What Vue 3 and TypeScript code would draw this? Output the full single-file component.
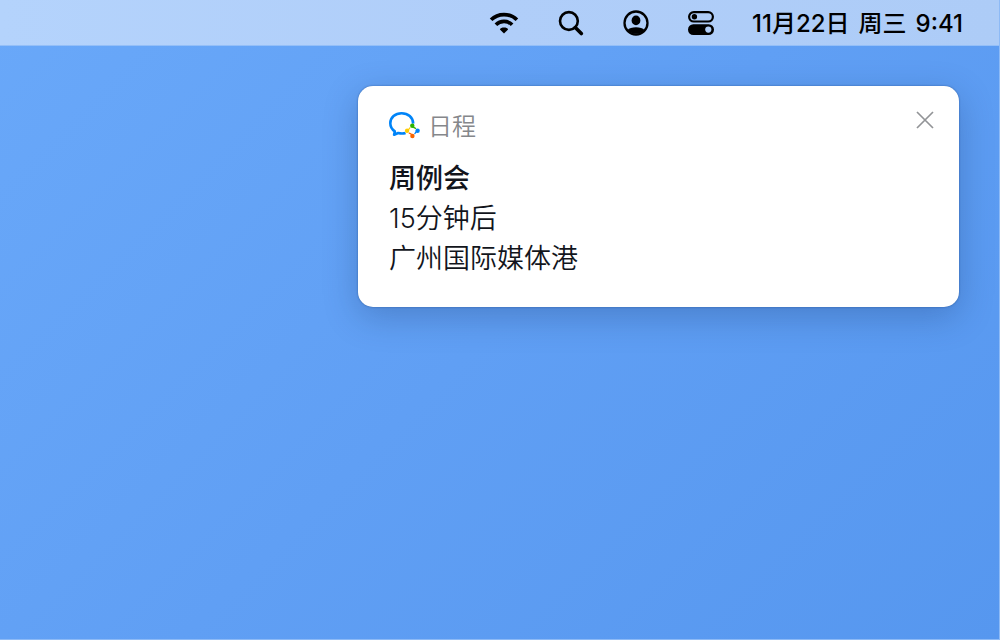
<script setup lang="ts">
import { ref } from 'vue'

interface Reminder {
  app: string
  title: string
  lines: string[]
}

const now: string[] = ['11月22日', '周三', '9:41']
const open = ref(true)
const reminder: Reminder = {
  app: '日程',
  title: '周例会',
  lines: ['15分钟后', '广州国际媒体港'],
}
</script>

<template>
  <div class="desktop">
    <header class="menubar">
      <button class="status" type="button" aria-label="Wi-Fi">
        <svg width="30" height="26" viewBox="0 0 30 26">
          <g fill="none" stroke="#000" stroke-width="3.7">
            <path d="M2.1 9.8C9 2.8 21 2.8 27.9 9.8" />
            <path d="M6.9 14.8C11.3 10.3 18.7 10.3 23.1 14.8" />
          </g>
          <path d="M15 23.6L10.9 19.4C11.6 16.8 18.4 16.8 19.1 19.4Z" />
        </svg>
      </button>
      <button class="status" type="button" aria-label="搜索">
        <svg width="26" height="26" viewBox="0 0 26 26">
          <circle cx="10.9" cy="11" r="8.9" fill="none" stroke="#000" stroke-width="2.6" />
          <path d="M17.3 17.6L23.3 23.6" stroke="#000" stroke-width="3.6" stroke-linecap="round" />
        </svg>
      </button>
      <button class="status" type="button" aria-label="用户">
        <svg width="26" height="26" viewBox="0 0 26 26">
          <circle cx="13" cy="13" r="11.5" fill="none" stroke="#000" stroke-width="2.3" />
          <ellipse cx="13" cy="10.4" rx="4.4" ry="4.9" />
          <path d="M4.6 20C7.2 16.2 18.8 16.2 21.4 20C17.5 25 8.5 25 4.6 20Z" />
        </svg>
      </button>
      <button class="status" type="button" aria-label="控制中心">
        <svg width="26" height="26" viewBox="0 0 26 26">
          <rect x="1.1" y="2.1" width="23.8" height="9.4" rx="4.7" fill="none" stroke="#000" stroke-width="2.2" />
          <circle cx="6.4" cy="6.8" r="2.7" />
          <rect x="0" y="14.3" width="26" height="10.7" rx="5.3" />
          <circle cx="20.3" cy="19.6" r="3.1" fill="#b0cef9" />
        </svg>
      </button>
      <time class="clock">
        <span v-for="part in now" :key="part">{{ part }}</span>
      </time>
    </header>

    <main class="stage">
      <article v-if="open" class="notice">
        <div class="source">
          <svg width="32" height="30" viewBox="0 0 32 30" aria-hidden="true">
            <path
              d="M24.2 12.6C24 6.4 19 2.2 12.6 2.2C6.2 2.2 1.3 6.5 1.3 12.3C1.3 15.8 3.1 18.6 5.8 20.4L5.1 23.8L9.2 22C11.5 22.6 14.3 22.7 16.6 22"
              fill="none"
              stroke="#0084f8"
              stroke-width="2.6"
              stroke-linejoin="round"
            />
            <circle cx="23.4" cy="20" r="6.8" fill="#fff" />
            <g fill="none" stroke-width="1.3" stroke-linecap="round">
              <path d="M23.2 14.6Q24.4 16.8 26.6 17.4" stroke="#2cb300" />
              <path d="M28.8 19.9Q26.5 20.8 25.9 22.6" stroke="#0084f8" />
              <path d="M23.4 24.8Q22.4 22.7 20.3 22.1" stroke="#fb6500" />
              <path d="M18 19.7Q20.2 18.6 20.8 16.9" stroke="#ffcc00" />
            </g>
            <circle cx="23.3" cy="14.7" r="2.2" fill="#2cb300" />
            <circle cx="28.6" cy="19.8" r="2.2" fill="#0084f8" />
            <circle cx="23.4" cy="25" r="2.2" fill="#fb6500" />
            <circle cx="18.1" cy="19.8" r="2.2" fill="#ffcc00" />
          </svg>
          <span>{{ reminder.app }}</span>
        </div>
        <h1>{{ reminder.title }}</h1>
        <p v-for="line in reminder.lines" :key="line">{{ line }}</p>
        <button class="close" type="button" aria-label="关闭" @click="open = false">
          <svg width="20" height="20" viewBox="0 0 20 20">
            <path d="M2 2L18 18M18 2L2 18" fill="none" stroke="#929497" stroke-width="1.7" />
          </svg>
        </button>
      </article>
    </main>
  </div>
</template>

<style>
body {
  margin: 0;
}
</style>

<style scoped>
.desktop {
  box-sizing: border-box;
  min-height: 100vh;
  border-right: 1px solid #8dbaf6;
  border-bottom: 1px solid #8dbaf6;
  background: linear-gradient(135deg, #69a8f9 0%, #609ff4 50%, #5697ef 100%);
  font-family: Inter, "Noto Sans CJK SC", sans-serif;
  color: #12151c;
}

.menubar {
  display: flex;
  align-items: center;
  justify-content: flex-end;
  box-sizing: border-box;
  height: 46px;
  padding-right: 36px;
  border-bottom: 1px solid #94bff8;
  background: linear-gradient(90deg, #b4d3fc, #b0cef9 50%, #adccf7);
}

button {
  display: flex;
  padding: 0;
  border: 0;
  background: none;
  cursor: pointer;
}

.status {
  margin-right: 39px;
}

.status:nth-of-type(4) {
  margin-right: 38px;
}

.clock {
  display: flex;
  gap: 9px;
  padding-top: 2px;
  font-size: 24px;
  font-weight: 500;
  line-height: 32px;
  color: #000;
  white-space: nowrap;
}

.stage {
  display: flex;
  justify-content: flex-end;
  padding: 40px 40px 40px 35%;
}

.notice {
  position: relative;
  box-sizing: border-box;
  flex: 0 1 601px;
  padding: 25px 30px 28px 31px;
  border-radius: 15px;
  background: #fff;
  box-shadow: 0 0 2px rgba(20, 60, 120, 0.6), 0 10px 34px rgba(20, 50, 100, 0.28);
}

.source {
  display: flex;
  align-items: flex-start;
  gap: 7px;
  height: 32px;
  margin-bottom: 16px;
  font-size: 24px;
  font-weight: 350;
  line-height: 32px;
  color: #85878b;
}

h1,
p {
  margin: 0;
  font-size: 27px;
  font-weight: 350;
  line-height: 40px;
}

h1 {
  font-weight: 500;
}

.close {
  position: absolute;
  top: 24px;
  right: 24px;
}
</style>
